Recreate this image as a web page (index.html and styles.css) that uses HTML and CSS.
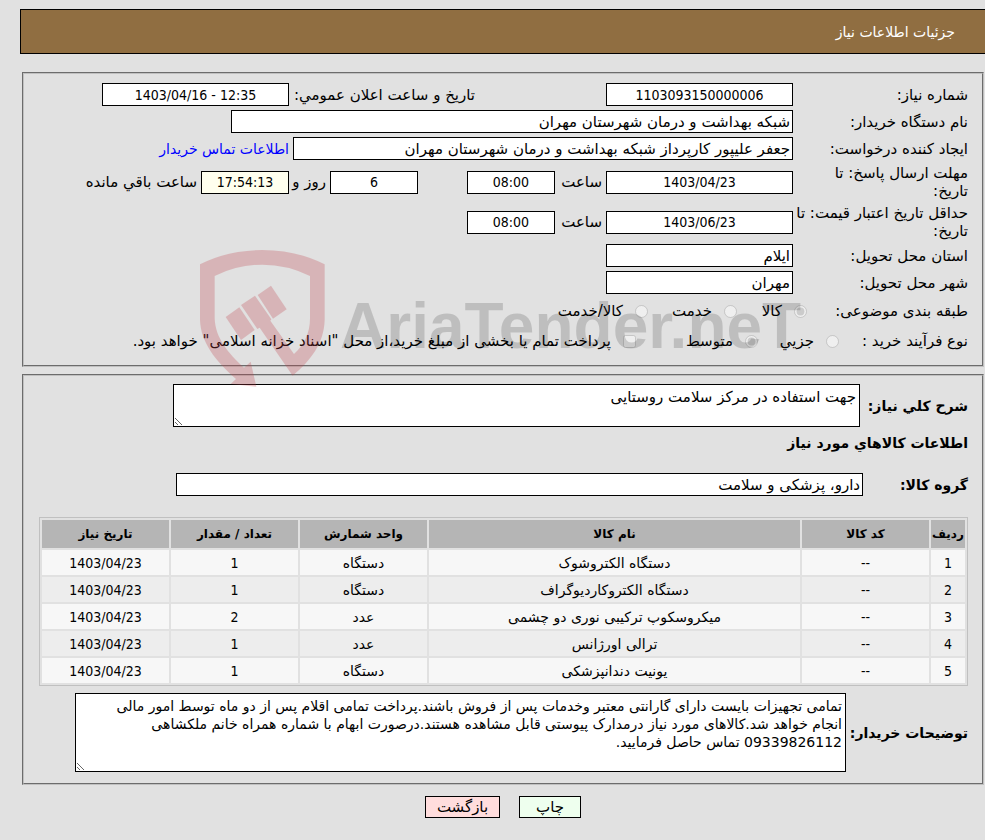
FILE: index.html
```html
<!DOCTYPE html>
<html lang="fa" dir="rtl">
<head>
<meta charset="utf-8">
<title>جزئیات اطلاعات نیاز</title>
<link rel="stylesheet" href="styles.css">
</head>
<body>
<header class="title-bar"><h1>جزئیات اطلاعات نیاز</h1></header>
<main class="page">
  <fieldset class="panel">
    <div class="row">
      <label class="caption" for="need-no">شماره نیاز:</label>
      <input class="field center medium" id="need-no" value="1103093150000006" readonly>
      <label class="far" for="announce">تاریخ و ساعت اعلان عمومي:</label>
      <input class="field center medium" id="announce" dir="ltr" value="1403/04/16 - 12:35" readonly>
    </div>
    <div class="row">
      <label class="caption" for="buyer">نام دستگاه خریدار:</label>
      <input class="field wide" id="buyer" value="شبکه بهداشت و درمان شهرستان مهران" readonly>
    </div>
    <div class="row">
      <label class="caption" for="creator">ایجاد کننده درخواست:</label>
      <input class="field long" id="creator" value="جعفر علیپور کارپرداز شبکه بهداشت و درمان شهرستان مهران" readonly>
      <a href="#contact">اطلاعات تماس خریدار</a>
    </div>
    <div class="row tall">
      <label class="caption" for="deadline">مهلت ارسال پاسخ: تا<br>تاریخ:</label>
      <input class="field center medium" id="deadline" value="1403/04/23" readonly>
      <label class="unit" for="deadline-hour">ساعت</label>
      <input class="field center short" id="deadline-hour" value="08:00" readonly>
      <input class="field center short spaced" id="days" value="6" readonly>
      <label class="days" for="days">روز و</label>
      <input class="field center short countdown" id="remaining" value="17:54:13" readonly>
      <label for="remaining">ساعت باقي مانده</label>
    </div>
    <div class="row tall">
      <label class="caption" for="validity">حداقل تاریخ اعتبار قیمت: تا<br>تاریخ:</label>
      <input class="field center medium" id="validity" value="1403/06/23" readonly>
      <label class="unit" for="validity-hour">ساعت</label>
      <input class="field center short" id="validity-hour" value="08:00" readonly>
    </div>
    <div class="row">
      <label class="caption" for="province">استان محل تحویل:</label>
      <input class="field medium" id="province" value="ایلام" readonly>
    </div>
    <div class="row">
      <label class="caption" for="city">شهر محل تحویل:</label>
      <input class="field medium" id="city" value="مهران" readonly>
    </div>
    <div class="row choices subject" role="radiogroup" aria-labelledby="subject">
      <span class="caption" id="subject">طبقه بندی موضوعی:</span>
      <label class="option"><input type="radio" name="subject" checked disabled>کالا</label>
      <label class="option"><input type="radio" name="subject" disabled>خدمت</label>
      <label class="option"><input type="radio" name="subject" disabled>کالا/خدمت</label>
    </div>
    <div class="row choices process" role="radiogroup" aria-labelledby="process">
      <span class="caption" id="process">نوع فرآیند خرید :</span>
      <label class="option"><input type="radio" name="process" disabled>جزیي</label>
      <label class="option"><input type="radio" name="process" checked disabled>متوسط</label>
      <label class="option"><input type="checkbox" disabled>پرداخت تمام یا بخشی از مبلغ خرید،از محل "اسناد خزانه اسلامی" خواهد بود.</label>
    </div>
  </fieldset>

  <fieldset class="panel goods">
    <div class="row strong summary">
      <label for="summary">شرح کلي نیاز:</label>
      <textarea class="field" id="summary" readonly>جهت استفاده در مرکز سلامت روستایی</textarea>
    </div>
    <h2>اطلاعات کالاهاي مورد نیاز</h2>
    <div class="row strong group">
      <label for="group">گروه کالا:</label>
      <input class="field" id="group" value="دارو، پزشکی و سلامت" readonly>
    </div>
    <table class="items">
      <colgroup><col class="c-row"><col class="c-std"><col><col class="c-std"><col class="c-std"><col class="c-std"></colgroup>
      <thead>
        <tr><th>ردیف</th><th>کد کالا</th><th>نام کالا</th><th>واحد شمارش</th><th>تعداد / مقدار</th><th>تاریخ نیاز</th></tr>
      </thead>
      <tbody>
        <tr><td class="num">1</td><td class="num">--</td><td>دستگاه الکتروشوک</td><td>دستگاه</td><td class="num">1</td><td class="num">1403/04/23</td></tr>
        <tr><td class="num">2</td><td class="num">--</td><td>دستگاه الکتروکاردیوگراف</td><td>دستگاه</td><td class="num">1</td><td class="num">1403/04/23</td></tr>
        <tr><td class="num">3</td><td class="num">--</td><td>میکروسکوپ ترکیبی نوری دو چشمی</td><td>عدد</td><td class="num">2</td><td class="num">1403/04/23</td></tr>
        <tr><td class="num">4</td><td class="num">--</td><td>ترالی اورژانس</td><td>عدد</td><td class="num">1</td><td class="num">1403/04/23</td></tr>
        <tr><td class="num">5</td><td class="num">--</td><td>یونیت دندانپزشکی</td><td>دستگاه</td><td class="num">1</td><td class="num">1403/04/23</td></tr>
      </tbody>
    </table>
    <div class="row strong notes">
      <label for="notes">توضیحات خریدار:</label>
      <textarea class="field" id="notes" readonly>تمامی تجهیزات بایست دارای گارانتی معتبر وخدمات پس از فروش باشند.پرداخت تمامی اقلام پس از دو ماه توسط امور مالی انجام خواهد شد.کالاهای مورد نیاز درمدارک پیوستی قابل مشاهده هستند.درصورت ابهام با شماره همراه خانم ملکشاهی 09339826112 تماس حاصل فرمایید.</textarea>
    </div>
  </fieldset>

  <div class="actions">
    <button class="print" type="button">چاپ</button>
    <button class="back" type="button">بازگشت</button>
  </div>
</main>

<div class="watermark" dir="ltr">
  <svg class="shield" viewBox="60 60 375 411" aria-hidden="true">
    <path d="M60 103Q145 60 247 60Q350 60 434 103V270C432 340 392 392 338 437L239 293L232 297L183 225L225 197L274 268L271 272L342 372C372 345 390 310 390 265V138Q322 104 247 104Q172 104 104 138V265C106 325 145 370 192 413L212 395L229 470L152 462L168 447C105 392 62 335 60 270Z"/>
    <path d="M137 261L178 232L224 300L183 330Z"/>
    <path d="M233 195L273 167L320 238L279 266Z"/>
  </svg>
  <span class="brand">AriaTender.neT</span>
</div>
</body>
</html>
```
FILE: styles.css
```css
* {
  box-sizing: border-box;
}

body {
  position: relative;
  margin: 0;
  padding: 9px 0 20px;
  background: #e1e1e1;
  color: #000;
  font: 15px/18px "DejaVu Sans", sans-serif;
}

.title-bar {
  display: flex;
  align-items: center;
  height: 45px;
  margin-left: 20px;
  padding-right: 30px;
  border: 1px solid #000;
  border-right: 0;
  background: #906e41;
  color: #fff;
}

.title-bar h1 {
  margin: 0;
  font-size: 14px;
  font-weight: normal;
}

.page {
  padding: 18px 1px 0 22px;
}

.panel {
  min-width: 0;
  margin: 0 0 7px;
  padding: 7px 14px 9px 15px;
  border: 2px groove #c0c0c0;
}

.row {
  display: flex;
  align-items: center;
  gap: 4px;
  min-height: 27px;
}

.tall {
  min-height: 40px;
}

.caption {
  flex: none;
  width: 171px;
  white-space: nowrap;
}

.field {
  min-width: 0;
  height: 23px;
  margin: 0;
  padding: 1px 2px;
  border: 1px solid #000;
  border-radius: 0;
  background: #fff;
  color: #000;
  font: inherit;
  font-weight: normal;
  outline: 0;
}

.center {
  font: 14px/18px "DejaVu Sans Condensed", "DejaVu Sans", sans-serif;
  text-align: center;
}

.medium {
  width: 187px;
}

.short {
  width: 88px;
}

.wide {
  width: 562px;
}

.long {
  width: 500px;
}

.far {
  width: 309px;
  padding-right: 127px;
  white-space: nowrap;
}

.unit {
  width: 43px;
}

.days {
  width: 33px;
  white-space: nowrap;
}

.spaced {
  margin-right: 45px;
}

.countdown {
  background: #ffffee;
}

a {
  color: #0000ff;
  font-size: 14px;
  text-decoration: none;
}

.choices {
  gap: 0;
  min-height: 30px;
}

.option {
  display: flex;
  align-items: center;
  gap: 12px;
  white-space: nowrap;
}

.option input {
  flex: none;
  width: 13px;
  height: 13px;
  margin: 0;
}

.subject .caption {
  width: 161px;
}

.subject .option:nth-child(2) {
  width: 70px;
}

.subject .option:nth-child(3) {
  width: 89px;
}

.process .caption {
  width: 129px;
}

.process .option:nth-child(2) {
  width: 81px;
}

.process .option:nth-child(3) {
  width: 122px;
}

.goods {
  padding-bottom: 11px;
}

.strong label,
h2 {
  flex: none;
  font-size: 14px;
  font-weight: bold;
  white-space: nowrap;
}

.strong .field {
  flex: 1;
}

.summary {
  padding: 1px 0 0 134px;
}

.summary textarea {
  height: 43px;
}

.summary label {
  width: 104px;
}

h2 {
  margin: 7px 0 19px;
}

.group {
  gap: 0;
  padding-left: 137px;
}

.group label {
  width: 105px;
}

.notes {
  padding-left: 36px;
}

.notes label {
  width: 118px;
}

.notes textarea {
  height: 79px;
  font-size: 14px;
}

textarea.field {
  display: block;
  padding: 3px 3px 3px 20px;
}

.items {
  width: 100%;
  margin: 19px 0 7px;
  border: 1px solid #c0c0c0;
  border-spacing: 2px;
  table-layout: fixed;
  font-size: 14px;
  text-align: center;
}

.c-row {
  width: 34px;
}

.c-std {
  width: 127px;
}

.items th {
  height: 28px;
  padding: 0;
  background: #b5b5b5;
  font-size: 12px;
}

.items td {
  height: 25px;
  padding: 0;
  background: #f7f7f7;
}

.items .num {
  font-family: "DejaVu Sans Condensed", "DejaVu Sans", sans-serif;
}

.items tr:nth-child(even) td {
  background: #ededed;
}

.actions {
  display: flex;
  justify-content: center;
  gap: 19px;
  margin-top: 11px;
}

.actions button {
  height: 22px;
  padding: 0;
  border: 1px solid #000;
  color: #000;
  font: inherit;
}

.print {
  width: 62px;
  background: #eeffee;
}

.back {
  width: 75px;
  background: #ffdddd;
}

.watermark {
  position: absolute;
  top: 250px;
  left: 200px;
  display: flex;
  gap: 15px;
  pointer-events: none;
}

.shield {
  width: 125px;
  height: 137px;
  fill: #c0404a;
  opacity: 0.27;
}

.brand {
  color: #000;
  font: bold 64px/152px "Liberation Sans", sans-serif;
  opacity: 0.15;
}
```
